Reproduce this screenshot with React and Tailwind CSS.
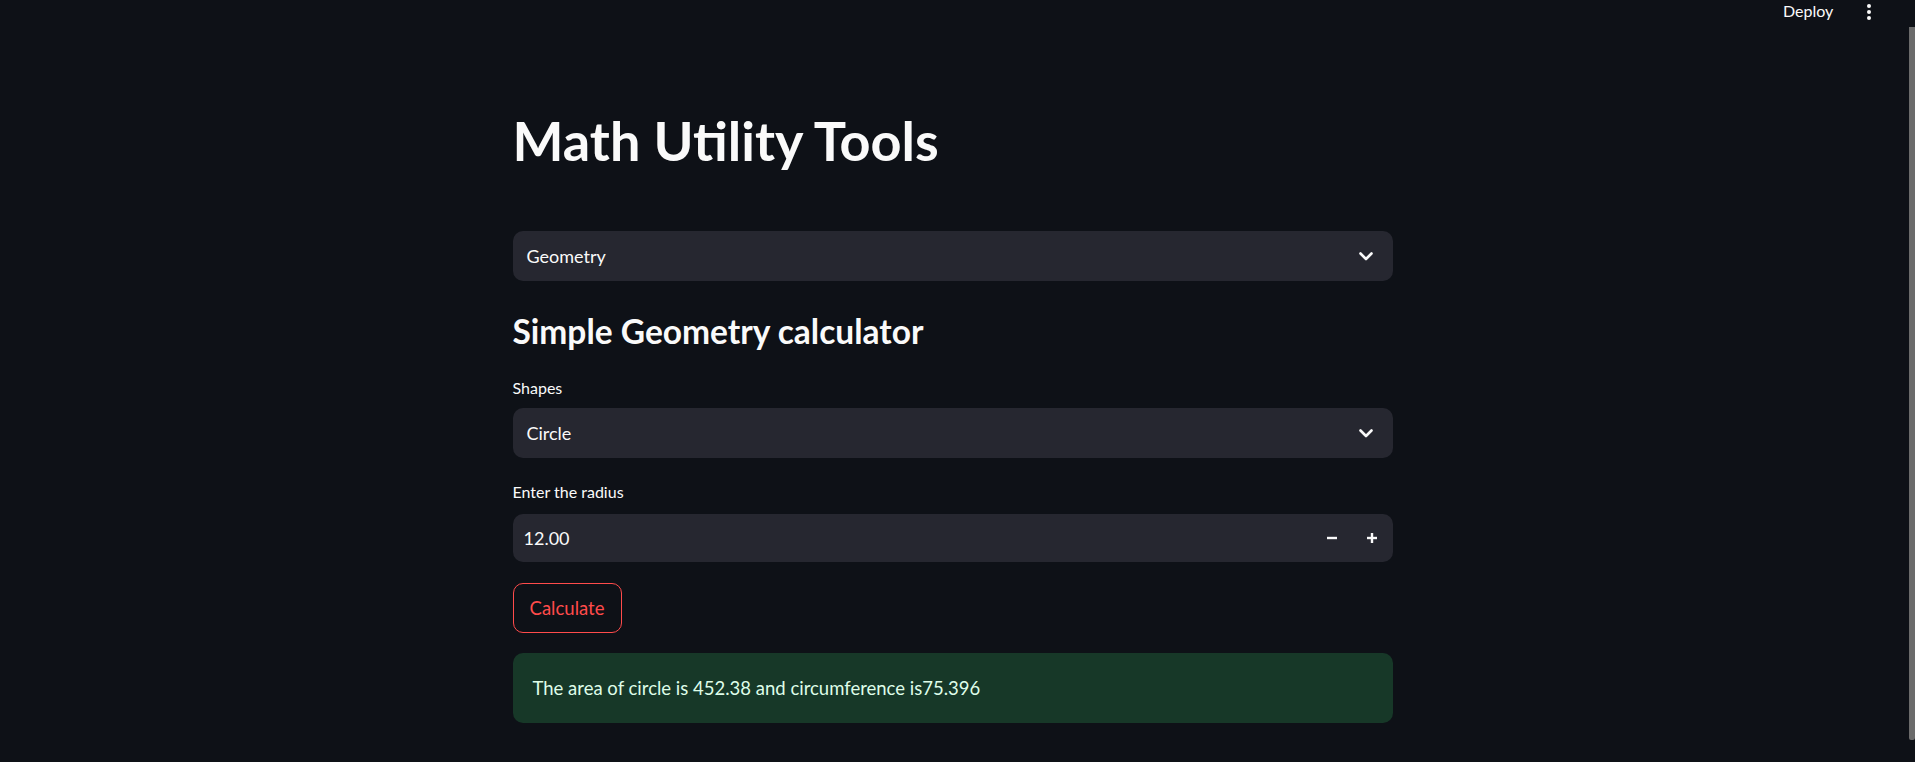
import React from "react";

const font = { fontFamily: "Lato, 'Open Sans', sans-serif" };

function Chevron() {
  return (
    <svg width="14" height="9" viewBox="0 0 14 9" fill="none">
      <path d="M1.5 1.5 L7 7 L12.5 1.5" stroke="#fafafa" strokeWidth="2.6" strokeLinecap="round" strokeLinejoin="round" />
    </svg>
  );
}

function Select({ value }) {
  return (
    <div className="flex h-[50px] w-full items-center justify-between rounded-[10px] bg-[#262730] pl-[14px] pr-[20px]">
      <span className="text-[18px] leading-none text-[#fafafa]">{value}</span>
      <Chevron />
    </div>
  );
}

export default function App() {
  return (
    <div className="relative h-[762px] w-full overflow-hidden bg-[#0e1117]" style={font}>
      {/* header */}
      <div className="absolute left-[1783px] top-[3px] text-[16px] leading-none text-[#fafafa]">Deploy</div>
      <div className="absolute left-[1867px] top-[4px] flex flex-col gap-[2px]">
        <span className="block h-[4px] w-[4px] rounded-full bg-[#fafafa]" />
        <span className="block h-[4px] w-[4px] rounded-full bg-[#fafafa]" />
        <span className="block h-[4px] w-[4px] rounded-full bg-[#fafafa]" />
      </div>
      {/* scrollbar */}
      <div className="absolute right-0 top-[27px] h-[713px] w-[6px] rounded-b-[2px] bg-[#6b6b6b]" />

      <div className="flex justify-center pr-[10px]">
        <div className="flex w-[880px] flex-col pt-[113px]">
          <h1 className="h-[56px] text-[54px] font-bold leading-[56px] text-[#fafafa]">Math Utility Tools</h1>
          <div className="mt-[62px]">
            <Select value="Geometry" />
          </div>
          <h3 className="mt-[34px] h-[32px] text-[33.5px] font-bold leading-[32px] text-[#fafafa]">Simple Geometry calculator</h3>
          <div className="mt-[33px] h-[16px] text-[16px] leading-none text-[#fafafa]">Shapes</div>
          <div className="mt-[12px]">
            <Select value="Circle" />
          </div>
          <div className="mt-[26px] h-[16px] text-[16px] leading-none text-[#fafafa]">Enter the radius</div>
          <div className="mt-[14px] flex h-[48px] items-center justify-between rounded-[10px] bg-[#262730] pl-[11px] pr-[16px]">
            <span className="text-[18px] leading-none text-[#fafafa]">12.00</span>
            <div className="flex items-center gap-[30px]">
              <svg width="10" height="10" viewBox="0 0 10 10">
                <rect x="0" y="3.8" width="10" height="2.4" fill="#fafafa" />
              </svg>
              <svg width="10" height="10" viewBox="0 0 10 10">
                <rect x="0" y="3.8" width="10" height="2.4" fill="#fafafa" />
                <rect x="3.8" y="0" width="2.4" height="10" fill="#fafafa" />
              </svg>
            </div>
          </div>
          <div className="mt-[21px]">
            <button className="flex h-[50px] w-[109px] items-center justify-center rounded-[10px] border border-[#ff4b4b] bg-transparent text-[18.5px] leading-none text-[#ff4b4b]">
              Calculate
            </button>
          </div>
          <div className="mt-[20px] flex h-[70px] items-center rounded-[10px] bg-[#173828] px-[20px]">
            <span className="text-[18.5px] leading-none text-[#dffde9]">The area of circle is 452.38 and circumference is75.396</span>
          </div>
        </div>
      </div>
    </div>
  );
}
